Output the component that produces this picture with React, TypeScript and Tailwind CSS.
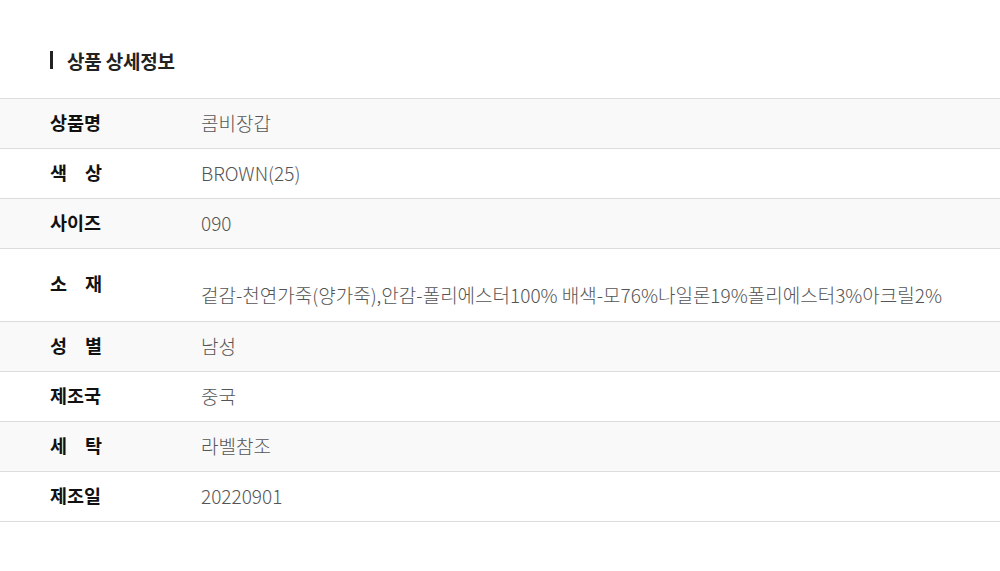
import React from "react";

type Row = { label: string[]; value: string; tall?: boolean };

const rows: Row[] = [
  { label: ["상품명"], value: "콤비장갑" },
  { label: ["색", "상"], value: "BROWN(25)" },
  { label: ["사이즈"], value: "090" },
  {
    label: ["소", "재"],
    value: "겉감-천연가죽(양가죽),안감-폴리에스터100% 배색-모76%나일론19%폴리에스터3%아크릴2%",
    tall: true,
  },
  { label: ["성", "별"], value: "남성" },
  { label: ["제조국"], value: "중국" },
  { label: ["세", "탁"], value: "라벨참조" },
  { label: ["제조일"], value: "20220901" },
];

export default function App() {
  return (
    <div
      className="w-[1000px] h-[571px] bg-white pt-[51px]"
      style={{ fontFamily: '"Noto Sans CJK KR", "Noto Sans", sans-serif' }}
    >
      <div className="flex items-center pl-[50px] h-[18px]">
        <div className="w-[3px] h-[18px] bg-[#222]" />
        <div className="ml-[14px] text-[19px] font-bold text-[#222] leading-none whitespace-nowrap tracking-[-0.2px]">
          상품 상세정보
        </div>
      </div>
      <div className="mt-[29px] border-t border-[#dcdcdc]">
        {rows.map((r, i) => (
          <div
            key={i}
            className={`flex border-b border-[#dcdcdc] ${i % 2 === 0 ? "bg-[#f9f9f9]" : "bg-white"} ${
              r.tall ? "h-[73px]" : "h-[50px] items-center pb-[3px]"
            }`}
          >
            <div
              className={`w-[201px] pl-[50px] shrink-0 ${r.tall ? "flex items-center pb-[3px]" : ""}`}
            >
              <div className="w-[52px] flex justify-between text-[18.5px] font-bold text-[#111] leading-none whitespace-nowrap">
                {r.label.map((l, j) => (
                  <span key={j}>{l}</span>
                ))}
              </div>
            </div>
            <div
              className={`text-[19px] text-[#555] font-light leading-none whitespace-nowrap ${
                r.tall ? "pt-[36px]" : ""
              }`}
            >
              {r.value}
            </div>
          </div>
        ))}
      </div>
    </div>
  );
}
